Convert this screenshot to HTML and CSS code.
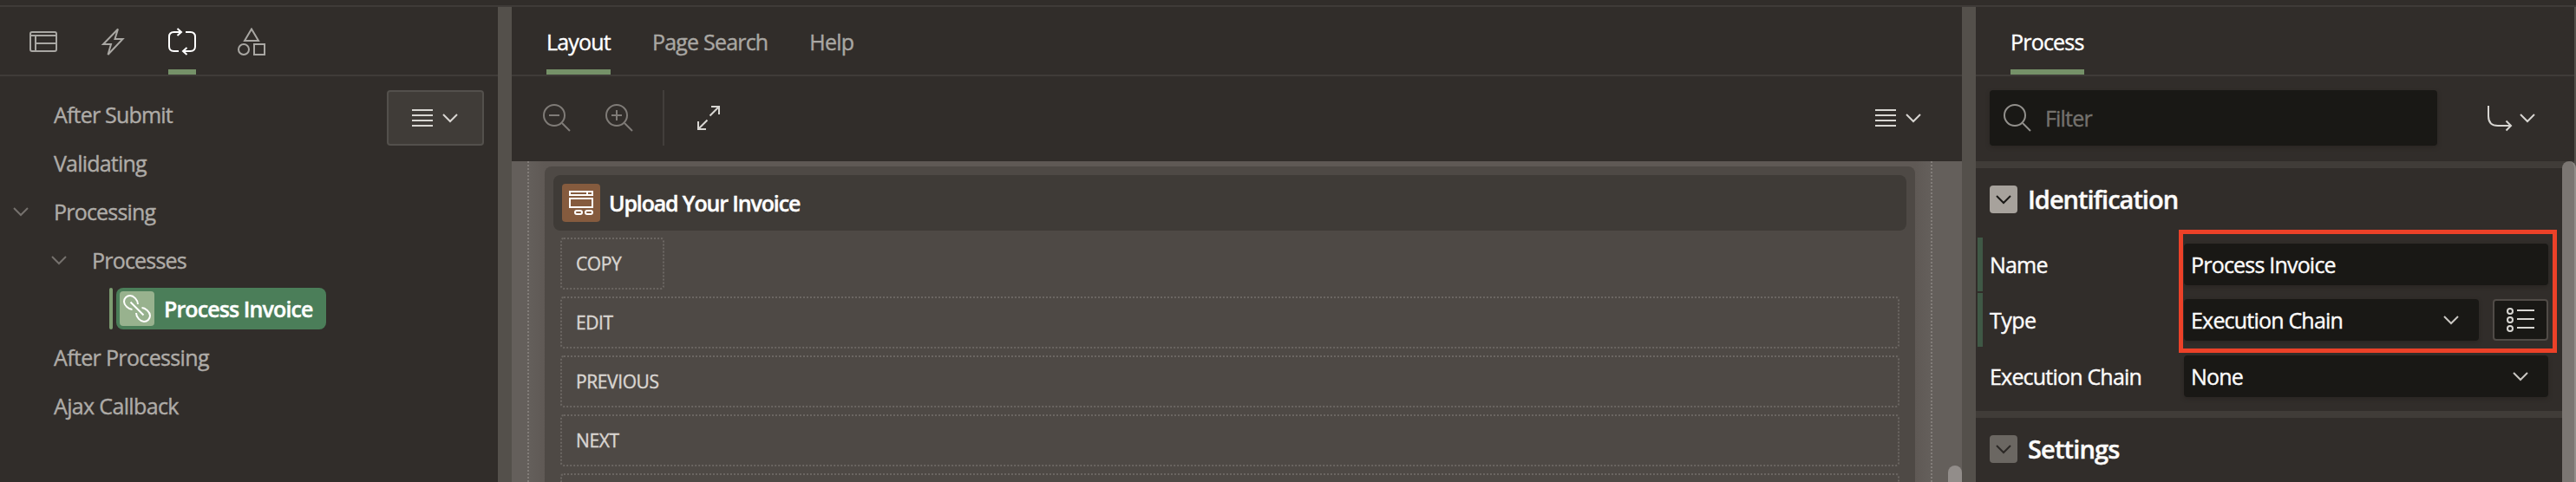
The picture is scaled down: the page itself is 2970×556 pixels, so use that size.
FILE: index.html
```html
<!DOCTYPE html>
<html lang="en">
<head>
<meta charset="utf-8">
<title>Page Designer</title>
<link rel="stylesheet" href="styles.css">
</head>
<body>
<svg class="defs" aria-hidden="true">
  <symbol id="chevron" viewBox="0 0 20 12"><path d="M2 2l8 8 8-8"/></symbol>
  <symbol id="menu" viewBox="0 0 24 22"><path d="M0 2h24M0 8h24M0 14h24M0 20h24"/></symbol>
</svg>
<div class="topbar"></div>
<main class="designer">
  <section class="tree-pane">
    <nav class="icon-tabs">
      <a class="icon-tab"><svg class="icon" viewBox="0 0 32 32"><path d="M1 7q0-2 2-2h26q2 0 2 2v18q0 2-2 2H3q-2 0-2-2zM1 9h30M7 9v18M7 18h24"/></svg></a>
      <a class="icon-tab"><svg class="icon" viewBox="0 0 32 32"><path d="M22 1.500L5 19h9L10.500 31 27.500 13H18.500z"/></svg></a>
      <a class="icon-tab icon-tab-on"><svg class="icon" viewBox="0 0 32 32"><path d="M12 27H6.500Q1 27 1 21.500v-11Q1 5 6.500 5H15M20 5h5.500Q31 5 31 10.500v11Q31 27 25.500 27H17M10.500 1l4.500 4-4.500 4M21.500 23L17 27l4.500 4"/></svg></a>
      <a class="icon-tab"><svg class="icon" viewBox="0 0 32 32"><path d="M16 1.500L24 15H8zM19 19h12v12H19z"/><circle cx="7" cy="25" r="6"/></svg></a>
    </nav>
    <div class="tree-area">
      <ul class="tree">
        <li class="node"><span class="t after-submit">After Submit</span></li>
        <li class="node"><span class="t validating">Validating</span></li>
        <li class="node"><svg class="chev"><use href="#chevron"/></svg><span class="t processing">Processing</span></li>
        <li class="node node-2"><svg class="chev"><use href="#chevron"/></svg><span class="t processes">Processes</span></li>
        <li class="node node-3"><span class="mark"></span><span class="selected"><span class="chain"><svg class="icon" viewBox="0 0 32 32"><path d="M10.500 17C6.500 17 1 12 1 8A7 7 0 0 1 8 1C12 1 17 6 17 11M21.500 15C25.500 15 31 20 31 24A7 7 0 0 1 24 31C20 31 15 26 15 21M8.500 8.500l15 15"/></svg></span><span class="t selected-text">Process Invoice</span></span></li>
        <li class="node"><span class="t after-processing">After Processing</span></li>
        <li class="node"><span class="t ajax">Ajax Callback</span></li>
      </ul>
      <button class="menu-button"><svg class="lines"><use href="#menu"/></svg><svg class="chev"><use href="#chevron"/></svg></button>
    </div>
  </section>
  <div class="splitter"></div>
  <section class="layout-pane">
    <nav class="text-tabs">
      <a class="tab tab-on"><span class="t layout">Layout</span></a>
      <a class="tab"><span class="t search">Page Search</span></a>
      <a class="tab"><span class="t help">Help</span></a>
    </nav>
    <div class="toolbar">
      <svg class="icon zoom" viewBox="0 0 32 32"><circle cx="13" cy="13" r="12"/><path d="M22 22l9 9M7 13h12"/></svg>
      <svg class="icon zoom" viewBox="0 0 32 32"><circle cx="13" cy="13" r="12"/><path d="M22 22l9 9M7 13h12M13 7v12"/></svg>
      <span class="rule"></span>
      <svg class="icon expand" viewBox="0 0 32 32"><path d="M18.500 13.500L29 3M20 3h9v9M15.500 18.500L5 29M5 20v9h9"/></svg>
      <span class="toolbar-menu"><svg class="lines"><use href="#menu"/></svg><svg class="chev"><use href="#chevron"/></svg></span>
    </div>
    <div class="canvas">
      <div class="page-body">
        <div class="region">
          <div class="region-head">
            <span class="region-icon"><svg class="icon" viewBox="0 0 32 32"><path d="M3 3h26v4H3zM23 3v4M3 11h26v10H3z"/><rect x="9" y="25" width="8" height="4" rx="2"/><rect x="21" y="25" width="8" height="4" rx="2"/></svg></span>
            <span class="t region-title">Upload Your Invoice</span>
          </div>
          <div class="slot slot-short"><span class="t copy">COPY</span></div>
          <div class="slot"><span class="t edit">EDIT</span></div>
          <div class="slot"><span class="t previous">PREVIOUS</span></div>
          <div class="slot"><span class="t next">NEXT</span></div>
          <div class="slot slot-cut"></div>
        </div>
      </div>
      <span class="canvas-thumb"></span>
    </div>
  </section>
  <div class="splitter"></div>
  <section class="property-pane">
    <nav class="text-tabs">
      <a class="tab tab-on"><span class="t process">Process</span></a>
    </nav>
    <div class="filter-row">
      <div class="filter"><svg class="icon" viewBox="0 0 32 32"><circle cx="13" cy="13" r="12"/><path d="M22 22l9 9"/></svg><span class="t filter-text">Filter</span></div>
      <span class="goto"><svg class="icon" viewBox="0 0 32 32"><path d="M3 2v12q0 11 11 11h15M23.500 19.500L29 25l-5.500 5.500"/></svg><svg class="chev"><use href="#chevron"/></svg></span>
    </div>
    <div class="group">
      <h2 class="group-head"><span class="toggle"><svg class="chev"><use href="#chevron"/></svg></span><span class="t identification">Identification</span></h2>
      <div class="prop prop-changed">
        <span class="t name">Name</span>
        <div class="field"><span class="t name-value">Process Invoice</span></div>
      </div>
      <div class="prop prop-changed">
        <span class="t type">Type</span>
        <div class="field field-narrow"><span class="t chain-text">Execution Chain</span><svg class="chev"><use href="#chevron"/></svg></div>
        <button class="list-button"><svg class="icon" viewBox="0 0 32 32"><circle cx="4" cy="6" r="3"/><circle cx="4" cy="16" r="3"/><circle cx="4" cy="26" r="3"/><path d="M12 5h20M12 15h20M12 25h20"/></svg></button>
      </div>
      <div class="prop">
        <span class="t chain-text">Execution Chain</span>
        <div class="field"><span class="t none">None</span><svg class="chev"><use href="#chevron"/></svg></div>
      </div>
      <span class="highlight"></span>
    </div>
    <div class="group group-cut">
      <h2 class="group-head"><span class="toggle toggle-dim"><svg class="chev"><use href="#chevron"/></svg></span><span class="t settings">Settings</span></h2>
    </div>
    <span class="property-thumb"></span>
  </section>
  <div class="edge"></div>
</main>
</body>
</html>
```

FILE: styles.css
```css
* { box-sizing: border-box; }
body {
  margin: 0;
  width: 2970px;
  height: 556px;
  overflow: hidden;
  background: #312d2a;
  color: #fcfbfa;
  font: 25px/34px "Open Sans", "Noto Sans", sans-serif;
  letter-spacing: -0.8px;
}
.defs { position: absolute; width: 0; height: 0; }
svg { fill: none; stroke: currentColor; stroke-width: 2; flex: none; display: block; }
.t { white-space: nowrap; -webkit-text-stroke: 0.4px currentColor; }
.icon { width: 32px; height: 32px; }
.chev { width: 20px; height: 12px; }
.lines { width: 24px; height: 22px; }
.topbar { height: 8px; border-bottom: 2px solid #3f3b38; }
.designer { display: grid; grid-template-columns: 574px 16px 1672px 16px 690px 2px; height: 548px; }
.splitter { background: #54504b; }
.edge { background: #54504b; }

.icon-tabs { display: flex; gap: 48px; height: 80px; padding: 0 34px; border-bottom: 2px solid #3f3b38; color: #a9a7a3; }
.icon-tab { height: 78px; padding-top: 24px; }
.icon-tab-on { color: #fff; border-bottom: 6px solid #759168; }
.tree-area { display: flex; padding-top: 16px; }
.tree { width: 446px; margin: 0; padding: 0; list-style: none; color: #aeaba7; }
.node { display: flex; align-items: center; height: 56px; padding-left: 62px; }
.after-processing, .ajax { letter-spacing: -0.65px; }
.node .chev { margin: 0 28px 0 -48px; color: #75716d; }
.node-2 { padding-left: 106px; }
.node-3 { padding-left: 126px; gap: 4px; }
.mark { width: 4px; height: 48px; border-radius: 2px; background: #7d9c71; }
.selected { display: flex; align-items: center; width: 242px; height: 48px; padding-left: 4px; gap: 11px; border-radius: 8px; background: #4b7e59; color: #fff; font-weight: 600; letter-spacing: -0.9px; }
.chain { width: 40px; height: 40px; padding: 4px; border-radius: 4px; background: #98b28e; }
.menu-button { display: flex; align-items: center; justify-content: center; gap: 10px; width: 112px; height: 64px; padding: 0; border: 2px solid #53504c; border-radius: 4px; background: #403c38; color: #d8d6d2; }

.text-tabs { display: flex; gap: 48px; height: 80px; padding-left: 40px; border-bottom: 2px solid #3f3b38; color: #a9a7a3; }
.tab { height: 78px; padding-top: 23px; }
.tab-on { color: #fff; border-bottom: 6px solid #759168; }
.toolbar { display: flex; align-items: center; height: 98px; padding: 0 46px 2px 36px; color: #d8d6d2; }
.zoom { margin-right: 40px; color: #7f7b77; }
.rule { width: 2px; height: 64px; margin: 0 34px 0 -6px; background: #423e3b; }
.toolbar-menu { display: flex; align-items: center; gap: 10px; margin-left: auto; }
.canvas { position: relative; height: 370px; padding: 0 34px 0 18px; background: #645f5b; }
.page-body { height: 370px; padding: 6px 18px 0; border-left: 2px dotted #827d79; border-right: 2px dotted #827d79; background: linear-gradient(90deg, #645f5b 0, #5f5955 18px, #5f5955 calc(100% - 18px), #645f5b 100%); }
.region { height: 364px; padding: 10px 10px 0; border-radius: 8px 8px 0 0; background: #4e4945; }
.region-head { display: flex; align-items: center; gap: 10px; height: 64px; padding-left: 10px; border-radius: 8px; background: #3f3b37; font-weight: 600; letter-spacing: -1.15px; color: #fff; }
.region-icon { width: 44px; height: 44px; padding: 6px; border-radius: 4px; background: #855b3e; }
.slot { height: 60px; margin: 8px 8px 0; padding: 13px 16px; border: 2px dotted #6b6662; border-radius: 4px; color: #d9d5d1; font-size: 21px; line-height: 30px; letter-spacing: -0.4px; }
.slot-short { width: 120px; }
.slot-cut { height: 10px; padding: 0; border-bottom: 0; border-radius: 4px 4px 0 0; }
.canvas-thumb { position: absolute; right: 0; top: 351px; width: 16px; height: 19px; border-radius: 8px 8px 0 0; background: #928d8a; }

.property-pane { position: relative; }
.filter-row { display: flex; align-items: center; height: 98px; padding: 0 44px 2px 16px; }
.filter { display: flex; align-items: center; gap: 16px; width: 516px; height: 64px; padding-left: 16px; border-radius: 4px; background: #191815; color: #74716d; box-shadow: 0 2px 4px #2a2623; }
.filter .icon { color: #92908c; }
.goto { display: flex; align-items: center; gap: 6px; margin-left: auto; color: #d8d6d2; }
.group { position: relative; height: 288px; border-top: 8px solid #403c38; }
.group-cut { height: 82px; }
.group-head { display: flex; align-items: center; gap: 12px; height: 72px; margin: 0 0 8px; padding: 0 16px; font-size: 29px; line-height: 40px; font-weight: 600; letter-spacing: -1px; }
.group-cut .group-head { margin-bottom: 0; }
.toggle { display: flex; align-items: center; justify-content: center; width: 32px; height: 32px; border-radius: 4px; background: #a7a29c; color: #191815; }
.toggle-dim { background: #6b6762; color: #2b2825; }
.settings { letter-spacing: -0.85px; }
.prop { display: flex; align-items: center; height: 64px; padding: 0 30px 0 10px; border-left: 6px solid transparent; }
.prop-changed { margin-left: 2px; padding-left: 8px; height: 62px; margin-bottom: 2px; border-color: #3f5845; }
.prop > .t { width: 224px; }
.type { letter-spacing: -0.5px; }
.field { display: flex; align-items: center; justify-content: space-between; width: 420px; height: 48px; padding: 0 22px 0 8px; border-radius: 4px; background: #191815; box-shadow: 0 2px 4px #2a2623; }
.field .chev { color: #c9c6c2; }
.field-narrow { width: 340px; }
.list-button { width: 64px; height: 48px; margin-left: 16px; padding: 6px 14px; border: 2px solid #504b47; border-radius: 4px; background: #191815; color: #d8d6d2; }
.highlight { position: absolute; left: 234px; top: 71px; width: 436px; height: 142px; border: 5px solid #ec4128; }
.property-thumb { position: absolute; right: -2px; top: 178px; width: 16px; height: 370px; border-radius: 8px 8px 0 0; background: #7b7672; border-right: 2px solid #928e8a; }
```
